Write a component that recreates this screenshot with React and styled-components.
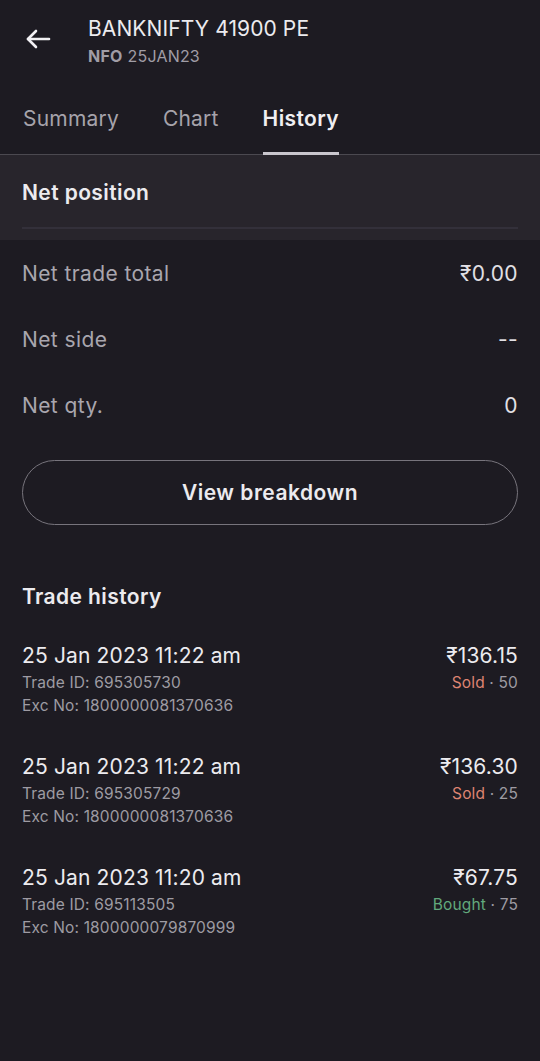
import React, { useState } from 'react';
import styled, { createGlobalStyle } from 'styled-components';

const GlobalStyle = createGlobalStyle`
    body {
        margin: 0;
        background: #1d1b22;
        font-family: Inter, "Noto Sans", "DejaVu Sans", sans-serif;
        -webkit-font-smoothing: antialiased;
    }
`;

const Page = styled.div`
    width: 540px;
    min-height: 1061px;
    background: #1d1b22;
    color: #e9e7ec;
`;

const Header = styled.div`
    display: flex;
    align-items: flex-start;
    padding: 16px 0 0 24px;
    height: 105px;
    box-sizing: border-box;
`;

const BackButton = styled.button`
    background: none;
    border: none;
    padding: 0;
    margin: 10px 36px 0 0;
    width: 28px;
    height: 26px;
    display: flex;
    align-items: center;
    justify-content: center;
    cursor: pointer;
`;

const TitleBlock = styled.div`
    display: flex;
    flex-direction: column;
`;

const Title = styled.div`
    font-size: 21px;
    line-height: 26px;
    color: #ecebef;
    letter-spacing: 0.1px;
`;

const Subtitle = styled.div`
    font-size: 16px;
    line-height: 22px;
    color: #a09da6;
    margin-top: 3px;
    letter-spacing: 0.2px;
    b {
        font-weight: 700;
        margin-right: 5px;
    }
`;

const Tabs = styled.div`
    display: flex;
    gap: 44px;
    padding: 0 0 0 23px;
    border-bottom: 1px solid #4b4950;
`;

const Tab = styled.button`
    background: none;
    border: none;
    padding: 0 0 19px;
    margin: 0 0 -1px;
    font-family: inherit;
    font-size: 21px;
    line-height: 28px;
    letter-spacing: ${p => (p.active ? '0.4px' : '0.2px')};
    font-weight: ${p => (p.active ? 600 : 400)};
    color: ${p => (p.active ? '#f0eff2' : '#a6a3ab')};
    border-bottom: 3px solid ${p => (p.active ? '#c9c6cd' : 'transparent')};
    cursor: pointer;
`;

const PanelHead = styled.div`
    background: #28252c;
    padding: 0 22px;
`;

const PanelTitle = styled.div`
    font-size: 21px;
    font-weight: 600;
    line-height: 24px;
    letter-spacing: 0.4px;
    padding: 26px 0 22px;
    border-bottom: 2px solid #33303a;
    color: #ecebef;
`;

const PanelGap = styled.div`
    height: 11px;
`;

const Rows = styled.div`
    padding: 0 22px;
`;

const Row = styled.div`
    display: flex;
    justify-content: space-between;
    align-items: center;
    height: 66px;
    font-size: 21px;
    letter-spacing: 0.4px;
`;

const RowLabel = styled.span`
    color: #a9a6ae;
`;

const RowValue = styled.span`
    color: #e2e0e5;
`;

const BreakdownButton = styled.button`
    display: block;
    width: 496px;
    height: 65px;
    margin: 22px 22px 0;
    background: transparent;
    border: 1.5px solid #77747c;
    border-radius: 33px;
    font-family: inherit;
    font-size: 21px;
    font-weight: 600;
    letter-spacing: 0.5px;
    color: #ecebef;
    cursor: pointer;
`;

const SectionTitle = styled.div`
    font-size: 21px;
    font-weight: 600;
    line-height: 24px;
    letter-spacing: 0.4px;
    color: #ecebef;
    padding: 60px 22px 0;
`;

const TradeList = styled.div`
    padding: 35px 22px 0;
    display: flex;
    flex-direction: column;
    gap: 38px;
`;

const Trade = styled.div`
    display: flex;
    justify-content: space-between;
`;

const TradeLeft = styled.div`
    display: flex;
    flex-direction: column;
`;

const TradeRight = styled.div`
    display: flex;
    flex-direction: column;
    align-items: flex-end;
`;

const MainText = styled.div`
    font-size: 21px;
    line-height: 24px;
    letter-spacing: 0.15px;
    color: #ecebef;
    margin-bottom: 3px;
`;

const SubText = styled.div`
    font-size: 15.5px;
    line-height: 23px;
    letter-spacing: 0.15px;
    color: #9e9ba3;
`;

const Side = styled.span`
    color: ${p => (p.buy ? '#62a97c' : '#de8472')};
`;

const trades = [
    { time: '25 Jan 2023 11:22 am', id: '695305730', exc: '1800000081370636', price: '₹136.15', side: 'Sold', qty: 50 },
    { time: '25 Jan 2023 11:22 am', id: '695305729', exc: '1800000081370636', price: '₹136.30', side: 'Sold', qty: 25 },
    { time: '25 Jan 2023 11:20 am', id: '695113505', exc: '1800000079870999', price: '₹67.75', side: 'Bought', qty: 75 },
];

const BackArrow = () => (
    <svg width="26" height="22" viewBox="0 0 26 22" fill="none" stroke="#f2f1f4" strokeWidth="2.6" strokeLinecap="round" strokeLinejoin="round">
        <path d="M24 11H3" />
        <path d="M11 3L3 11L11 19" />
    </svg>
);

export default function App() {
    const [tab, setTab] = useState('History');
    return (
        <Page>
            <GlobalStyle />
            <Header>
                <BackButton aria-label="Back"><BackArrow /></BackButton>
                <TitleBlock>
                    <Title>BANKNIFTY 41900 PE</Title>
                    <Subtitle><b>NFO</b>25JAN23</Subtitle>
                </TitleBlock>
            </Header>
            <Tabs>
                {['Summary', 'Chart', 'History'].map(t => (
                    <Tab key={t} active={tab === t} onClick={() => setTab(t)}>{t}</Tab>
                ))}
            </Tabs>
            <PanelHead>
                <PanelTitle>Net position</PanelTitle>
                <PanelGap />
            </PanelHead>
            <Rows>
                <Row><RowLabel>Net trade total</RowLabel><RowValue>₹0.00</RowValue></Row>
                <Row><RowLabel>Net side</RowLabel><RowValue>--</RowValue></Row>
                <Row><RowLabel>Net qty.</RowLabel><RowValue>0</RowValue></Row>
            </Rows>
            <BreakdownButton>View breakdown</BreakdownButton>
            <SectionTitle>Trade history</SectionTitle>
            <TradeList>
                {trades.map((t, i) => (
                    <Trade key={i}>
                        <TradeLeft>
                            <MainText>{t.time}</MainText>
                            <SubText>Trade ID: {t.id}</SubText>
                            <SubText>Exc No: {t.exc}</SubText>
                        </TradeLeft>
                        <TradeRight>
                            <MainText>{t.price}</MainText>
                            <SubText><Side buy={t.side === 'Bought'}>{t.side}</Side> · {t.qty}</SubText>
                        </TradeRight>
                    </Trade>
                ))}
            </TradeList>
        </Page>
    );
}
